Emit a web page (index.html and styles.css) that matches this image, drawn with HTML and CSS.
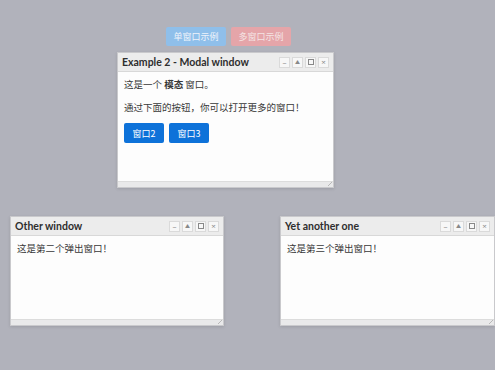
FILE: index.html
```html
<!DOCTYPE html>
<html lang="zh-CN">
<head>
  <meta charset="UTF-8" />
  <title>窗口示例</title>
  <link rel="stylesheet" href="styles.css">
</head>
<body>
  <div class="toolbar">
    <button class="demo-btn single">单窗口示例</button>
    <button class="demo-btn multi">多窗口示例</button>
  </div>

  <div class="win modal">
    <div class="win-head">
      <span class="win-title">Example 2 - Modal window</span>
      <div class="win-ctrls">
        <span class="ctrl">&ndash;</span><span class="ctrl tri">&#9650;</span><span class="ctrl sq"><i></i></span><span class="ctrl">&times;</span>
      </div>
    </div>
    <div class="win-body">
      <p>这是一个 <b>模态</b> 窗口。</p>
      <p>通过下面的按钮，你可以打开更多的窗口！</p>
      <div class="actions">
        <button class="open-btn">窗口2</button>
        <button class="open-btn">窗口3</button>
      </div>
    </div>
    <div class="win-foot"><span class="grip"></span></div>
  </div>

  <div class="win other">
    <div class="win-head">
      <span class="win-title">Other window</span>
      <div class="win-ctrls">
        <span class="ctrl">&ndash;</span><span class="ctrl tri">&#9650;</span><span class="ctrl sq"><i></i></span><span class="ctrl">&times;</span>
      </div>
    </div>
    <div class="win-body">
      <p>这是第二个弹出窗口！</p>
    </div>
    <div class="win-foot"><span class="grip"></span></div>
  </div>

  <div class="win another">
    <div class="win-head">
      <span class="win-title">Yet another one</span>
      <div class="win-ctrls">
        <span class="ctrl">&ndash;</span><span class="ctrl tri">&#9650;</span><span class="ctrl sq"><i></i></span><span class="ctrl">&times;</span>
      </div>
    </div>
    <div class="win-body">
      <p>这是第三个弹出窗口！</p>
    </div>
    <div class="win-foot"><span class="grip"></span></div>
  </div>
</body>
</html>
```

FILE: styles.css
```css
body {
  margin: 0;
  width: 495px;
  height: 370px;
  background: #b1b2bb;
  font-family: "Open Sans", "Noto Sans CJK SC", sans-serif;
  position: relative;
  overflow: hidden;
}
.toolbar {
  display: flex;
  gap: 5px;
  padding: 27px 0 0 166px;
}
.demo-btn {
  width: 60px;
  height: 19px;
  border: none;
  border-radius: 2px;
  color: #eef3fa;
  font-size: 9px;
  font-family: "Noto Sans CJK SC", sans-serif;
  padding: 0;
}
.demo-btn.single {
  background: #8fbfea;
}
.demo-btn.multi {
  background: #e5a5a9;
  color: #f4e4e4;
}
.win {
  position: absolute;
  display: flex;
  flex-direction: column;
  background: #fdfdfd;
  border: 1px solid #c9c9cc;
  box-shadow: 0 1px 3px rgba(0,0,0,0.12);
}
.modal {
  left: 117px;
  top: 52px;
  width: 215px;
  height: 134px;
}
.other {
  left: 10px;
  top: 216px;
  width: 212px;
  height: 108px;
}
.another {
  left: 280px;
  top: 216px;
  width: 213px;
  height: 108px;
}
.win-head {
  display: flex;
  align-items: center;
  justify-content: space-between;
  height: 18px;
  padding: 0 4px 0 4px;
  background: #ececec;
  border-bottom: 1px solid #d8d8d8;
}
.win-title {
  font-family: "Lato", sans-serif;
  font-weight: bold;
  font-size: 10.5px;
  color: #2e2e2e;
}
.win-ctrls {
  display: flex;
  gap: 2px;
}
.ctrl {
  display: flex;
  align-items: center;
  justify-content: center;
  width: 9px;
  height: 9px;
  border: 1px solid #dadada;
  background: #f7f7f7;
  color: #888;
  font-size: 8px;
  line-height: 1;
}
.ctrl.tri {
  font-size: 5px;
}
.ctrl.sq i {
  display: block;
  width: 4px;
  height: 4px;
  border: 1px solid #888;
}
.win-body {
  flex: 1;
  padding: 5px 6px;
  font-family: "Noto Sans CJK SC", sans-serif;
  font-size: 9.5px;
  color: #383838;
}
.win-body p {
  margin: 0 0 9px;
  line-height: 14px;
}
.actions {
  display: flex;
  gap: 5px;
  margin-top: 2px;
}
.open-btn {
  width: 40px;
  height: 20px;
  border: none;
  border-radius: 2px;
  background: #0e72d9;
  color: #fff;
  font-family: "Noto Sans CJK SC", sans-serif;
  font-size: 9px;
  padding: 0;
}
.win-foot {
  position: relative;
  height: 5px;
  background: #e9e9ea;
  border-top: 1px solid #dcdcdc;
}
.grip {
  position: absolute;
  right: 1px;
  bottom: 1px;
  width: 4px;
  height: 4px;
  background: linear-gradient(135deg, transparent 45%, #b8b8b8 50%, transparent 60%);
}
```
